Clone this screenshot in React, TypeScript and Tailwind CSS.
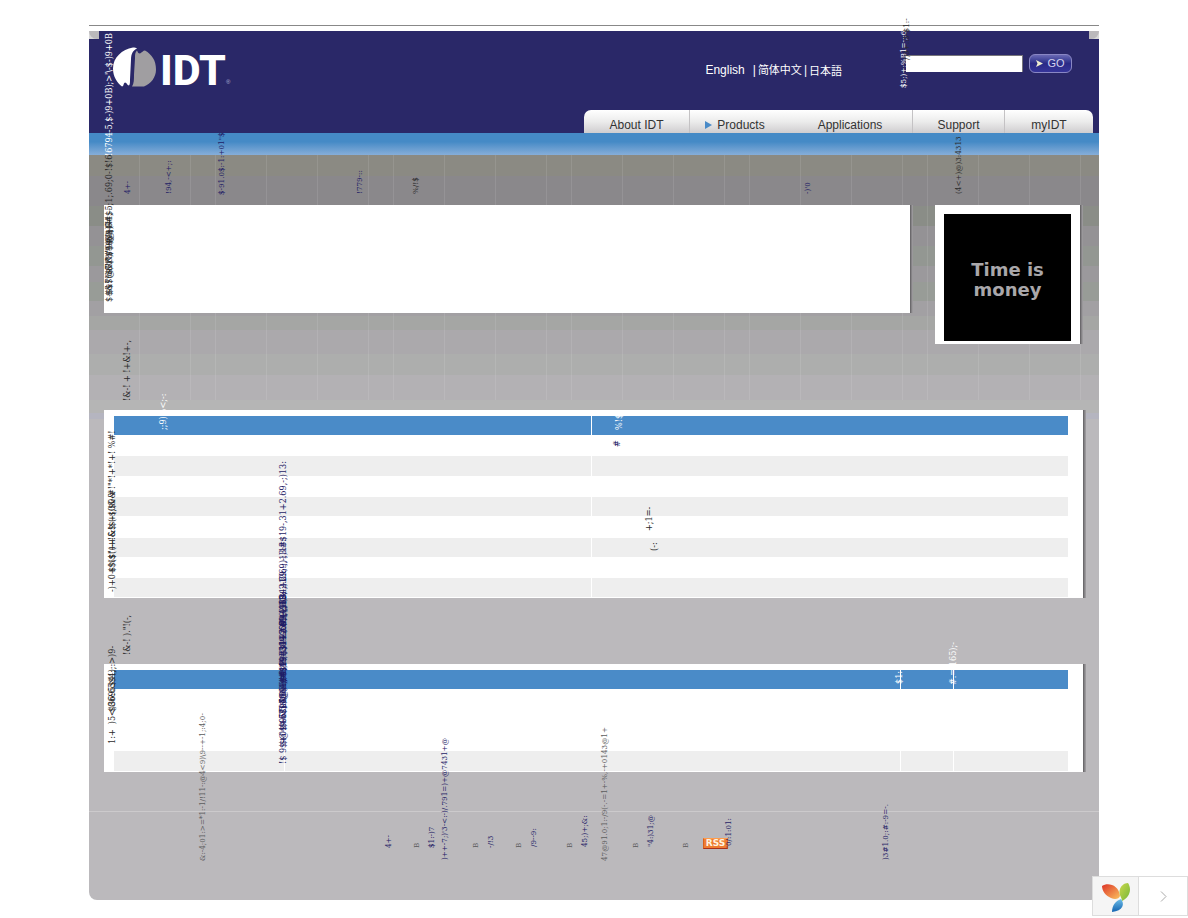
import { type ReactNode } from "react";

type Label = { text: string; place: string; color: string; href?: boolean; small?: boolean };

const INK = "text-[#2b2b2b]";
const NAVY = "text-[#1f1d66]";
const GREY = "text-[#5c5c5c]";
const WHITE = "text-white";

// Sideways captions, anchored at the foot of each line
const labels: Label[] = [
  { text: "$-$$7%&(\")/$-@);(+", place: "left-[15px] top-[302px]", color: INK },
  { text: "$&$@(\")*$-9);/+8", place: "left-[15px] top-[296px]", color: INK },
  { text: "$R&(\")$@;+#$-", place: "left-[15px] top-[274px]", color: INK },
  { text: "#-$)74,-5;1;.69;0-!$!6", place: "left-[15px] top-[244px]", color: INK },
  { text: "!6794-5,$-)9+0B);>'\\-$-)9+0B", place: "left-[15px] top-[156px]", color: WHITE },
  { text: "4+-", place: "left-[34px] top-[194px]", color: NAVY, href: true, small: true },
  { text: "!94,-<+;:", place: "left-[75px] top-[194px]", color: NAVY, href: true, small: true },
  { text: "$-91.0$:-1:+01\"$", place: "left-[128px] top-[195px]", color: NAVY, href: true, small: true },
  { text: "!779-::", place: "left-[266px] top-[194px]", color: NAVY, href: true, small: true },
  { text: "%/!$", place: "left-[322px] top-[194px]", color: INK, small: true },
  { text: "-)'0", place: "left-[714px] top-[194px]", color: NAVY, href: true, small: true },
  { text: "(4<+)@)3:4313", place: "left-[865px] top-[194px]", color: INK, small: true },
  { text: "$5;)+;%B1=-;:69", place: "left-[810px] top-[88px]", color: WHITE, small: true },
  { text: "/)9+.:9-$1:-", place: "left-[813px] top-[60px]", color: INK, small: true },
  { text: "!&-! + !+&!+-,", place: "left-[33px] top-[401px]", color: INK },
  { text: "!&-! ).\"!(-,", place: "left-[33px] top-[655px]", color: INK },
  { text: ";;9)%<;-:", place: "left-[69px] top-[430px]", color: WHITE },
  { text: "%!$", place: "left-[525px] top-[430px]", color: WHITE },
  { text: "#", place: "left-[523px] top-[447px]", color: NAVY, href: true },
  { text: "+;1=-", place: "left-[555px] top-[531px]", color: INK },
  { text: "(-:", place: "left-[560px] top-[551px]", color: INK },
  { text: "-)+0+$($(++&$-(-$0&-#!\"*!+*!+! %#!", place: "left-[18px] top-[592px]", color: INK },
  { text: "$%$\"(+!&!$+(;$0&", place: "left-[18px] top-[572px]", color: INK },
  { text: "!$ 9$+0$+67,.4@)9;#$19-,31+2.69,-;)13:", place: "left-[189px] top-[764px]", color: NAVY, href: true },
  { text: "$@4%5$0&96:#$19-,31+2.69,-;)13:", place: "left-[189px] top-[745px]", color: NAVY, href: true },
  { text: "$9&5$@(4;:#$19-,31+2.69,-;)13:", place: "left-[189px] top-[728px]", color: NAVY, href: true },
  { text: "!$79&6$4,)8:#$19-,31+2.69,-;)13:", place: "left-[189px] top-[712px]", color: NAVY, href: true },
  { text: "$-8:4$%,69:#$19-,31+2.69,-;)13:", place: "left-[189px] top-[683px]", color: NAVY, href: true },
  { text: "#$19-,31+2.69,-;)13:", place: "left-[189px] top-[626px]", color: NAVY, href: true },
  { text: "#$19-,31+2.69,-;)13:", place: "left-[189px] top-[548px]", color: NAVY, href: true },
  { text: "1:+  )5<)36:65$4);:>)9-", place: "left-[18px] top-[744px]", color: INK },
  { text: "$8695$4(;", place: "left-[18px] top-[712px]", color: INK },
  { text: "$1:", place: "left-[805px] top-[684px]", color: WHITE },
  { text: "#.=:165);-", place: "left-[859px] top-[685px]", color: WHITE },
  { text: "&:-4;01:>=*1:-1/!11-:@4<9)\\9--+-1;:4;0-", place: "left-[109px] top-[861px]", color: GREY, small: true },
  { text: "47@91.0;1:-/9(-.-=1+-%,-+0143@1+", place: "left-[511px] top-[861px]", color: GREY, small: true },
  { text: "4+-", place: "left-[295px] top-[848px]", color: NAVY, href: true, small: true },
  { text: "B", place: "left-[323px] top-[848px]", color: GREY, small: true },
  { text: "$1:-)7", place: "left-[338px] top-[848px]", color: NAVY, href: true, small: true },
  { text: ")++-7;)'3-<:-)/.791=)+@7431+@", place: "left-[351px] top-[860px]", color: NAVY, href: true, small: true },
  { text: "B", place: "left-[382px] top-[848px]", color: GREY, small: true },
  { text: "-/!3", place: "left-[397px] top-[848px]", color: NAVY, href: true, small: true },
  { text: "B", place: "left-[425px] top-[848px]", color: GREY, small: true },
  { text: "/9--9:", place: "left-[440px] top-[847px]", color: NAVY, href: true, small: true },
  { text: "B", place: "left-[476px] top-[848px]", color: GREY, small: true },
  { text: "45;)+;&:", place: "left-[491px] top-[847px]", color: NAVY, href: true, small: true },
  { text: "B", place: "left-[542px] top-[848px]", color: GREY, small: true },
  { text: "\"4:)31;@", place: "left-[557px] top-[847px]", color: NAVY, href: true, small: true },
  { text: "B", place: "left-[592px] top-[848px]", color: GREY, small: true },
  { text: "'0/:1:01:", place: "left-[635px] top-[848px]", color: NAVY, href: true, small: true },
  { text: ")3#1.0;:#:-9=-.", place: "left-[792px] top-[860px]", color: NAVY, href: true, small: true },
];

function SideLabel({ text, place, color, href, small }: Label) {
  const size = small ? "text-[8px] leading-[10px]" : "text-[9px] leading-[10px]";
  const cls = `absolute z-10 -translate-y-full rotate-180 whitespace-pre font-['DejaVu_Serif_Condensed','DejaVu_Serif',serif] [writing-mode:vertical-rl] ${size} ${place} ${color}`;
  return href ? (
    <a href="#" className={cls}>{text}</a>
  ) : (
    <span className={cls}>{text}</span>
  );
}

function Logo() {
  return (
    <a href="#" aria-label="IDT home" className="flex items-start gap-1 text-white">
      <svg width="43" height="43" viewBox="0 0 43 42">
        <path d="M20 1C9 3 0 11 0 22c0 8 4 14 9 18 2 0 1-3 3-4 2 0 2 3 4 3 1-1 1-3 1-6L18 13c0-6 2-9 6-11-1-1-2-1-4-1z" fill="#fff" />
        <path d="M24 4c1 2 1 3 3 3 2-1 3-3 5-3 7 4 11 10 11 19 0 8-5 14-12 17H19c2-3 2-7 2-12l1-16c0-4 0-6 2-8z" fill="#a09ea1" />
      </svg>
      <span className="pt-[3px] font-['Roboto',sans-serif] text-[43px] leading-[42px] font-extrabold">IDT</span>
      <span className="-ml-1 pt-8 text-[6px] leading-[8px] text-[#b8b6d8]">®</span>
    </a>
  );
}

function NavItem({ width, children }: { width: string; children: ReactNode }) {
  return (
    <a
      href="#"
      className={`flex h-full items-center justify-center gap-[5px] border-[#c4c2c4] pt-[6px] text-[#333333] ${width}`}
    >
      {children}
    </a>
  );
}

function Header() {
  return (
    <header className="relative flex h-[102px] flex-col justify-between bg-[#2a2868]">
      <div className="absolute top-0 left-0 h-2 w-[10px] bg-[#d8d8d8]">
        <div className="h-full rounded-bl-full bg-[#bbb9bc]" />
      </div>
      <div className="absolute top-0 right-0 h-2 w-[10px] bg-[#d8d8d8]">
        <div className="h-full rounded-br-full bg-[#bbb9bc]" />
      </div>
      <div className="flex items-start justify-between pt-[15px] pr-[27px] pl-6">
        <Logo />
        <div className="flex items-start pt-2">
          <div className="mt-2 mr-16 flex items-center font-['Liberation_Sans','Noto_Sans_CJK_SC',sans-serif] text-[12px] leading-4 text-white">
            <a href="#">English</a>
            <span className="mr-[2px] ml-2">|</span>
            <a href="#" className="text-[11px]">简体中文</a>
            <span className="mx-[2px]">|</span>
            <a href="#" className="font-['Noto_Sans_CJK_JP',sans-serif] text-[11px]">日本語</a>
          </div>
          <form className="flex items-center gap-[6px]" onSubmit={(e) => e.preventDefault()}>
            <input
              type="text"
              aria-label="Search"
              className="h-[17px] w-[117px] border-t border-r border-[#77757a] bg-white px-1 text-[10px]"
            />
            <button
              type="submit"
              className="flex h-[19px] w-[43px] items-center justify-center gap-1 rounded-[6px] border border-[#8987c4] bg-linear-to-b from-[#6a69b4] via-[#2a2a86] to-[#36359a] text-[11px] text-[#d4d3ee]"
            >
              <svg width="7" height="7" viewBox="0 0 7 7">
                <path d="M0 0l7 3.5L0 7l1.500-3.500z" fill="#efedcf" />
              </svg>
              GO
            </button>
          </form>
        </div>
      </div>
      <nav className="mr-[6px] flex h-[23px] self-end rounded-t-[7px] bg-linear-to-b from-white via-[#ececec] to-[#cfcdcf] text-[12px]">
        <NavItem width="w-[106px] border-r">About IDT</NavItem>
        <NavItem width="w-[98px] pr-2">
          <svg width="7" height="8" viewBox="0 0 7 8">
            <path d="M0 0l7 4-7 4z" fill="#4a8bc8" />
          </svg>
          Products
        </NavItem>
        <NavItem width="w-[125px] border-r">Applications</NavItem>
        <NavItem width="w-[92px] border-r">Support</NavItem>
        <NavItem width="w-[88px]">myIDT</NavItem>
      </nav>
    </header>
  );
}

const card = "bg-white shadow-[1px_0_0_#6b696c,2px_0_0_#858386,3px_0_0_#9a989b]";

const rows = [
  "h-[21px]",
  "h-[20px] bg-[#eeeeee]",
  "h-[21px]",
  "h-[19px] bg-[#eeeeee]",
  "h-[22px]",
  "h-[19px] bg-[#eeeeee]",
  "h-[21px]",
  "h-[19px] bg-[#eeeeee]",
];

function FeatureTable() {
  return (
    <section className={`mr-4 ml-[15px] pt-[6px] pr-[15px] pb-px pl-[10px] ${card}`}>
      <table className="w-full table-fixed border-collapse">
        <thead>
          <tr className="h-[19px] bg-[#4a8bc8]">
            <th className="w-1/2 border-r border-white p-0" />
            <th className="p-0" />
          </tr>
        </thead>
        <tbody>
          {rows.map((row, i) => (
            <tr key={i} className={row}>
              <td className="border-r border-white p-0" />
              <td className="p-0" />
            </tr>
          ))}
        </tbody>
      </table>
    </section>
  );
}

function DocumentTable() {
  return (
    <section className={`mr-4 ml-[15px] pt-[6px] pr-[15px] pb-px pl-[10px] ${card}`}>
      <table className="w-full table-fixed border-collapse">
        <thead>
          <tr className="h-[19px] bg-[#4a8bc8]">
            <th className="w-[170px] p-0" />
            <th className="border-r border-white p-0" />
            <th className="w-[53px] border-r border-white p-0" />
            <th className="w-[115px] p-0" />
          </tr>
        </thead>
        <tbody>
          {["h-[62px]", "h-[20px] bg-[#eeeeee]"].map((row) => (
            <tr key={row} className={row}>
              <td className="border-r border-white p-0" />
              <td className="border-r border-white p-0" />
              <td className="border-r border-white p-0" />
              <td className="p-0" />
            </tr>
          ))}
        </tbody>
      </table>
    </section>
  );
}

// Stepped grey fade with thin seams that repeat across the page
const backdrop =
  "bg-[#bbb9bc] [background-image:linear-gradient(90deg,transparent_50px,#ffffff18_50px_51px,transparent_51px_101px,#ffffff18_101px_102px,transparent_102px_126px,#ffffff18_126px_127px,transparent_127px_177px,#ffffff18_177px),linear-gradient(#8b8a83_21px,#8a888b_21px_51px,#8a8d87_51px_71px,#949295_71px_91px,#939792_91px_111px,#9b999c_111px_127px,#989c97_127px_146px,#a2a0a3_146px_161px,#a5a6a4_161px_175px,#aba9ac_175px_199px,#adaead_199px_220px,#b3b1b4_220px_245px,#b5b5b5_245px_258px,#b5b5c0_258px)] [background-repeat:repeat-x] [background-size:178px_245px,100%_264px]";

function DebugToolbar() {
  return (
    <div className="fixed right-0 bottom-[2px] z-20 flex h-10 w-24 border border-[#dddddd] bg-white">
      <a href="#" aria-label="Debugger" className="flex w-[46px] items-center justify-center border-r border-[#dddddd] bg-[#f5f5f5]">
        <svg width="30" height="32" viewBox="0 0 30 32">
          <defs>
            <linearGradient id="leafRed" x1="0" y1="0" x2="1" y2="1">
              <stop offset="0" stopColor="#dd3428" />
              <stop offset="1" stopColor="#fbc25e" />
            </linearGradient>
            <linearGradient id="leafGreen" x1="0" y1="0" x2="1" y2="1">
              <stop offset="0" stopColor="#cbd84b" />
              <stop offset="1" stopColor="#75b73b" />
            </linearGradient>
            <linearGradient id="leafBlue" x1="0" y1="1" x2="0" y2="0">
              <stop offset="0" stopColor="#1263b0" />
              <stop offset="1" stopColor="#6dbde8" />
            </linearGradient>
          </defs>
          <path d="M1 6c6-4 17-1 18 10-1 3-5 4-9 2C5 16 1 11 1 6z" fill="url(#leafRed)" />
          <path d="M27 3c4 6 2 14-6 18 0-4-4-6-2-12 1-3 4-6 8-6z" fill="url(#leafGreen)" />
          <path d="M20 19c4 5 2 12-9 13 0-6 3-11 9-13z" fill="url(#leafBlue)" />
        </svg>
      </a>
      <button type="button" aria-label="Expand" className="flex flex-1 items-center justify-center text-[#aaaaaa]">
        <svg width="7" height="11" viewBox="0 0 7 11" fill="none" stroke="currentColor">
          <path d="M1 .5l5 5-5 5" />
        </svg>
      </button>
    </div>
  );
}

export default function App() {
  return (
    <div className="min-h-screen bg-white font-['Liberation_Sans',Arial,sans-serif]">
      <div className="relative mx-auto w-full max-w-[1010px] pt-[25px] pb-[18px]">
        <div className="mb-[5px] h-px bg-[#888888]" />
        <Header />
        <div className="h-[22px] bg-linear-to-b from-[#458ac6] from-40% to-[#86aed9]" />
        <main className={`rounded-b-[8px] pt-[50px] ${backdrop}`}>
          <div className="mb-[66px] flex items-start justify-between pr-[19px] pl-[15px]">
            <div className={`mr-[25px] h-[108px] flex-1 ${card}`} />
            <div className={`bg-white pt-[9px] pr-[9px] pb-[3px] pl-[9px] ${card}`}>
              <div className="flex h-[127px] w-[127px] items-center justify-center bg-black pt-1 text-center font-['DejaVu_Sans',sans-serif] text-[18px] leading-[20px] font-bold text-[#a9a7aa]">
                Time is
                <br />
                money
              </div>
            </div>
          </div>
          <FeatureTable />
          <div className="h-[66px]" />
          <DocumentTable />
          <footer className="mt-[39px] flex h-[89px] items-start border-t border-[#cccacc]">
            <a
              href="#"
              className="mt-[26px] ml-[614px] flex h-[11px] w-[25px] items-center justify-center border border-t-[#ff9c4a] border-r-[#d8601c] border-b-[#a8301c] border-l-[#d8601c] bg-[#ee7c30] font-['DejaVu_Sans',sans-serif] text-[9px] leading-[9px] font-bold text-[#fff4e0]"
            >
              RSS
            </a>
          </footer>
        </main>
        {labels.map((label, i) => (
          <SideLabel key={i} {...label} />
        ))}
      </div>
      <DebugToolbar />
    </div>
  );
}
